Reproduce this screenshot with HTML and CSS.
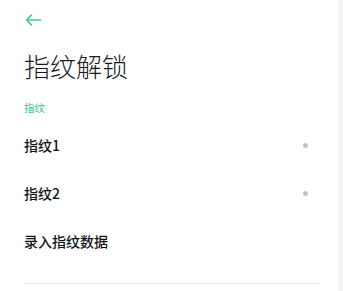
FILE: index.html
```html
<!DOCTYPE html>
<html lang="zh">
<head>
<meta charset="utf-8">
<link rel="stylesheet" href="styles.css">
</head>
<body>
<div class="screen">
  <main class="page">
    <header class="header">
      <svg class="back" width="16" height="12" viewBox="0 0 16 12" aria-hidden="true">
        <path d="M15.5 6H1.5M6.5 1L1.5 6L6.5 11" fill="none" stroke="#45c98f" stroke-width="1.6" stroke-linecap="round" stroke-linejoin="round"/>
      </svg>
    </header>
    <h1 class="title">指纹解锁</h1>
    <div class="section-label">指纹</div>
    <ul class="list">
      <li class="row"><span class="row-text">指纹1</span><span class="dot"></span></li>
      <li class="row"><span class="row-text">指纹2</span><span class="dot"></span></li>
      <li class="row"><span class="row-text">录入指纹数据</span></li>
    </ul>
    <div class="divider"></div>
  </main>
  <div class="scrollbar"></div>
</div>
</body>
</html>
```
FILE: styles.css
```css
html, body {
  margin: 0;
  padding: 0;
  background: #ffffff;
}
body {
  font-family: "Noto Sans CJK SC", "Noto Sans", sans-serif;
  color: #111;
}
.screen {
  display: flex;
  height: 291px;
  overflow: hidden;
}
.page {
  flex: 1;
  padding: 0 19px 0 24px;
}
.scrollbar {
  width: 5px;
  background: #f4f4f4;
}
.header {
  height: 40px;
  display: flex;
  align-items: center;
}
.back {
  display: block;
  margin-left: 1px;
}
.title {
  margin: 8px 0 0;
  font-size: 26px;
  line-height: 36px;
  font-weight: 300;
  color: #1a1a1a;
}
.section-label {
  margin-top: 16px;
  font-size: 10.5px;
  line-height: 15px;
  color: #3fc48a;
}
.list {
  list-style: none;
  margin: 6px 0 0;
  padding: 0;
}
.row {
  height: 48px;
  display: flex;
  align-items: center;
  justify-content: space-between;
}
.row-text {
  font-size: 14px;
  font-weight: 500;
  color: #141414;
}
.dot {
  width: 5px;
  height: 5px;
  border-radius: 50%;
  background: #c2c2c2;
  margin-right: 11px;
}
.divider {
  margin-top: 18px;
  height: 1px;
  background: #ededed;
}
```
